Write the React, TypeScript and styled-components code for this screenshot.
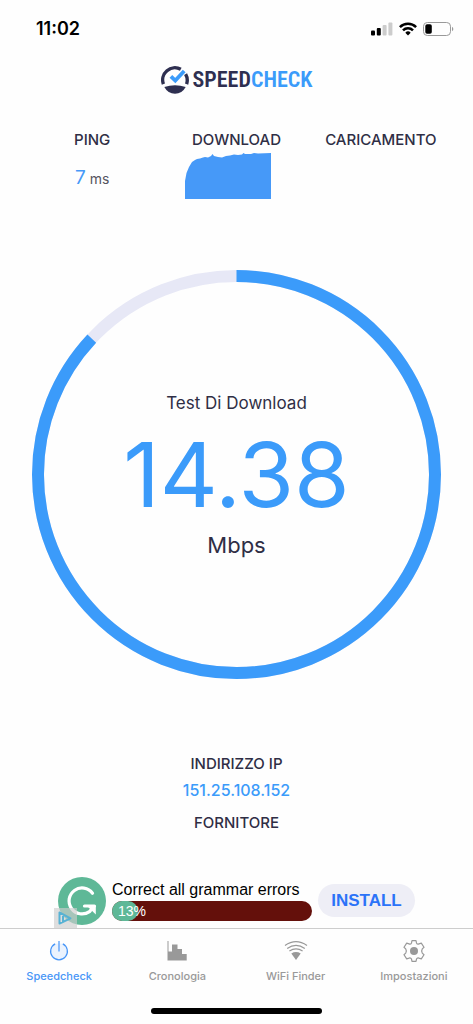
import React from 'react';
import styled, { createGlobalStyle } from 'styled-components';

const GlobalStyle = createGlobalStyle`
  * { box-sizing: border-box; }
  body {
    margin: 0;
    background: #fefefe;
    color: #2f2e45;
    font-family: Inter, "Liberation Sans", sans-serif;
  }
`;

const Page = styled.div`
  display: flex;
  flex-direction: column;
  min-height: 100vh;
`;

const StatusBar = styled.header`
  display: flex;
  align-items: center;
  justify-content: space-between;
  height: 56px;
  padding: 1px 19px 0 36px;
`;

const Clock = styled.time`
  color: #000;
  font-size: 18px;
  font-weight: 600;
  line-height: 24px;
`;

const StatusIcons = styled.div`
  display: flex;
  align-items: center;
  gap: 6px;
`;

const Content = styled.main`
  display: flex;
  flex: 1;
  flex-direction: column;
`;

const Brand = styled.h1`
  display: flex;
  align-items: center;
  justify-content: center;
  gap: 4px;
  height: 48px;
  margin: 0;
  color: #2e2f50;
  font-family: "Roboto Condensed", "Open Sans Condensed", Roboto, sans-serif;
  font-size: 22px;
  font-weight: 600;
  line-height: 28px;
`;

const Accent = styled.span`
  color: #3b9bfa;
`;

const Stats = styled.section`
  display: grid;
  grid-template-columns: repeat(3, 1fr);
  min-height: 72px;
  margin-top: 26px;
  padding: 0 20px;
`;

const Stat = styled.div`
  display: flex;
  flex-direction: column;
  align-items: center;
`;

const Heading = styled.h2`
  margin: 0;
  font-size: 15px;
  font-weight: 500;
  line-height: 20px;
`;

const Ping = styled.p`
  margin: 16px 0 0;
  color: #55555f;
  font-size: 14px;
  line-height: 24px;
`;

const PingValue = styled.span`
  color: #4699f8;
  font-size: 19px;
  font-weight: 400;
`;

const ChartBox = styled.div`
  display: flex;
  margin-top: 3px;
  padding-right: 16px;
`;

const Gauge = styled.section`
  display: grid;
  place-items: center;
  margin: 68px 32px 0;
`;

const Ring = styled.svg`
  display: block;
  grid-area: 1 / 1;
  width: 100%;
`;

const Reading = styled.div`
  display: flex;
  grid-area: 1 / 1;
  flex-direction: column;
  align-items: center;
`;

const TestName = styled.p`
  margin: 0;
  font-size: 17px;
  line-height: 24px;
`;

const Speed = styled.p`
  margin: 16px 0 12px;
  color: #3b9bfa;
  font-size: 90px;
  line-height: 88px;
`;

const Unit = styled.p`
  margin: 0;
  font-size: 22px;
  line-height: 28px;
`;

const Network = styled.section`
  display: flex;
  flex-direction: column;
  align-items: center;
  margin: 75px 0 43px;
`;

const Address = styled.p`
  margin: 6px 0 13px;
  color: #3b9bfa;
  font-size: 16px;
  font-weight: 500;
  line-height: 20px;
`;

const Ad = styled.aside`
  position: relative;
  display: flex;
  align-self: center;
  gap: 6px;
  margin-top: auto;
  padding-bottom: 3px;
  font-family: "Liberation Sans", Arial, sans-serif;
`;

const AdChoices = styled.a`
  position: absolute;
  bottom: 0;
  left: -4px;
  display: flex;
  background: rgba(204, 204, 204, 0.65);
`;

const AdBody = styled.div`
  width: 200px;
  padding-top: 3px;
`;

const AdTitle = styled.p`
  margin: 0;
  color: #000;
  font-size: 16px;
  line-height: 20px;
  white-space: nowrap;
`;

const AdBar = styled.div`
  height: 20px;
  margin-top: 1px;
  border-radius: 10px;
  background: #64100b;
`;

const AdFill = styled.div`
  width: 13%;
  height: 20px;
  padding-left: 6px;
  border-radius: 10px;
  background: #5eb897;
  color: #fff;
  font-size: 14px;
  line-height: 20px;
  white-space: nowrap;
`;

const Install = styled.button`
  align-self: flex-start;
  width: 97px;
  height: 33px;
  margin-top: 7px;
  padding: 0;
  border: 0;
  border-radius: 17px;
  background: #eeeef6;
  color: #2b73f8;
  font: 700 17px/33px "Liberation Sans", Arial, sans-serif;
`;

const TabBar = styled.nav`
  display: grid;
  grid-template-columns: repeat(4, 1fr);
  height: 74px;
  padding-top: 11px;
  border-top: 1px solid #cdcdcd;
`;

const Tab = styled.a<{ $active?: boolean }>`
  display: flex;
  flex-direction: column;
  align-items: center;
  gap: 6px;
  color: ${({ $active }) => ($active ? '#4896f7' : '#999')};
  font-size: 11px;
  font-weight: 500;
  line-height: 16px;
  text-decoration: none;
`;

const HomeBar = styled.footer`
  height: 22px;
  &::before {
    content: "";
    display: block;
    width: 36%;
    height: 6px;
    margin: 6px auto 0;
    border-radius: 3px;
    background: #000;
  }
`;

const SignalIcon = () => (
  <svg width="22" height="14" viewBox="0 0 22 14" aria-hidden="true">
    <rect x="0" y="8.5" width="4" height="5" rx="1" />
    <rect x="5.8" y="6" width="4" height="7.5" rx="1" />
    <rect x="11.6" y="3" width="4" height="10.5" rx="1" fill="#ccc" />
    <rect x="17.4" y="0.5" width="4" height="13" rx="1" fill="#ccc" />
  </svg>
);

const StatusWifiIcon = () => (
  <svg width="18" height="14" viewBox="0 0 18 14" aria-hidden="true">
    <g fill="none" stroke="#000" strokeWidth="2.5">
      <path d="M0.9 5.1A11.5 11.5 0 0 1 17.1 5.1" />
      <path d="M4 8.3A7 7 0 0 1 14 8.3" />
    </g>
    <path d="M6.3 10.7A3.8 3.8 0 0 1 11.7 10.7L9 13.5Z" />
  </svg>
);

const BatteryIcon = () => (
  <svg width="31" height="14" viewBox="0 0 31 14" aria-hidden="true">
    <rect x="0.5" y="0.5" width="27" height="13" rx="3.8" fill="none" stroke="#999" />
    <rect x="2.3" y="2.2" width="6.5" height="9.6" rx="1.8" />
    <path d="M29 4.8C30.8 5.5 30.8 8.5 29 9.2Z" fill="#999" />
  </svg>
);

const LogoIcon = () => (
  <svg width="28" height="28" viewBox="0 0 28 28" aria-hidden="true">
    <g fill="none" stroke="#2e2f50" strokeWidth="3.4">
      <path d="M2.4 18.1A12.2 12.2 0 0 1 19.8 3.3" />
      <path d="M24.6 8.2A12.2 12.2 0 0 1 25.6 18.1" />
    </g>
    <path d="M3.3 21Q14 17.4 24.7 21Q21 27.8 14 27.8Q7 27.8 3.3 21Z" fill="#2e2f50" />
    <path d="M9.9 10.3L14.3 14.6L23.2 5" fill="none" stroke="#3b9bfa" strokeWidth="3.8" />
  </svg>
);

const DownloadChart = () => (
  <svg width="86" height="46" viewBox="0 0 86 46" role="img" aria-label="Download">
    <path
      fill="#4699f8"
      d="M0 46V28L1.5 20L4 14L7 9L10 7L12 6L15 5.5L18 4.5L20 4L23 4.5L26 3L27.5 1L29 3L33 4L37 4.5L41 3L45 2.5L49 1.5L53 2L57 1.5L58.5 0L60 1L66 1L69 0L73 0.5L86 0V46Z"
    />
  </svg>
);

const GrammarIcon = () => (
  <svg width="48" height="48" viewBox="0 0 48 48" aria-hidden="true">
    <circle cx="24" cy="24" r="24" fill="#5eb897" />
    <g fill="none" stroke="#fff" strokeWidth="3.2" strokeLinecap="round" strokeLinejoin="round">
      <path d="M34.5 16.2A13 13 0 1 0 31.500 34.600L35.500 30" />
      <path d="M26.500 29H36.500" />
    </g>
    <path d="M29 29H37.800V37.600Z" fill="#fff" />
  </svg>
);

const PowerIcon = () => (
  <svg width="22" height="22" viewBox="0 0 22 22" aria-hidden="true">
    <circle cx="11" cy="11.5" r="8.3" fill="#ebf3fe" />
    <path d="M7.2 3.9A8.4 8.4 0 1 0 14.8 3.9M11 1V11.500" fill="none" stroke="currentColor" strokeWidth="1.2" />
  </svg>
);

const HistoryIcon = () => (
  <svg width="22" height="22" viewBox="0 0 22 22" aria-hidden="true">
    <path d="M1.5 1H2.5V11.5H6V4.500H11.5V9H16V14H20.7V20.500H1.5Z" fill="currentColor" />
  </svg>
);

const WifiIcon = () => (
  <svg width="24" height="22" viewBox="0 0 24 22" aria-hidden="true">
    <g fill="none" stroke="currentColor" strokeWidth="1.2">
      <path d="M1 5.500Q12 -2.300 23 5.500" />
      <path d="M3.2 8.400Q12 2.200 20.8 8.400" />
      <path d="M5.4 11.100Q12 6.600 18.6 11.100" />
    </g>
    <path d="M7.3 13.500Q12 10.700 16.7 13.500L12 20Z" fill="currentColor" />
  </svg>
);

const GearIcon = () => (
  <svg width="22" height="22" viewBox="0 0 22 22" aria-hidden="true">
    <path
      fill="none"
      stroke="currentColor"
      strokeWidth="1.2"
      strokeLinejoin="round"
      d="M9 0.600H13L13.5 2.9Q14.3 4.6 16 3.9L18.3 3.1L21 7.300L19.300 8.900Q18 11 19.300 13.100L21 14.700L18.3 18.9L16 18.1Q14.3 17.4 13.5 19.1L13 21.4H9L8.5 19.1Q7.7 17.4 6 18.1L3.7 18.9L1 14.700L2.700 13.100Q4 11 2.700 8.900L1 7.300L3.7 3.1L6 3.9Q7.7 4.6 8.5 2.9Z"
    />
    <circle cx="11" cy="11" r="4" fill="currentColor" />
  </svg>
);

const tabs = [
  { label: 'Speedcheck', Icon: PowerIcon, active: true },
  { label: 'Cronologia', Icon: HistoryIcon },
  { label: 'WiFi Finder', Icon: WifiIcon },
  { label: 'Impostazioni', Icon: GearIcon },
];

export default function App() {
  return (
    <Page>
      <GlobalStyle />
      <StatusBar>
        <Clock>11:02</Clock>
        <StatusIcons>
          <SignalIcon />
          <StatusWifiIcon />
          <BatteryIcon />
        </StatusIcons>
      </StatusBar>
      <Content>
        <Brand>
          <LogoIcon />
          <span>SPEED<Accent>CHECK</Accent></span>
        </Brand>
        <Stats>
          <Stat>
            <Heading>PING</Heading>
            <Ping><PingValue>7</PingValue> ms</Ping>
          </Stat>
          <Stat>
            <Heading>DOWNLOAD</Heading>
            <ChartBox><DownloadChart /></ChartBox>
          </Stat>
          <Stat>
            <Heading>CARICAMENTO</Heading>
          </Stat>
        </Stats>
        <Gauge>
          <Ring viewBox="0 0 410 410" aria-hidden="true">
            <g fill="none" strokeWidth="12" transform="rotate(-90 205 205)">
              <circle cx="205" cy="205" r="199" stroke="#e7e8f6" />
              <circle cx="205" cy="205" r="199" stroke="#3b9bfa" pathLength="100" strokeDasharray="87 13" />
            </g>
          </Ring>
          <Reading>
            <TestName>Test Di Download</TestName>
            <Speed>14.38</Speed>
            <Unit>Mbps</Unit>
          </Reading>
        </Gauge>
        <Network>
          <Heading>INDIRIZZO IP</Heading>
          <Address>151.25.108.152</Address>
          <Heading>FORNITORE</Heading>
        </Network>
        <Ad>
          <GrammarIcon />
          <AdBody>
            <AdTitle>Correct all grammar errors</AdTitle>
            <AdBar><AdFill>13%</AdFill></AdBar>
          </AdBody>
          <Install type="button">INSTALL</Install>
          <AdChoices href="#" aria-label="AdChoices">
            <svg width="23" height="20" viewBox="0 0 23 20" aria-hidden="true">
              <path d="M5.5 4.5V15.5L16.5 10.3L5.5 4.5ZM9 8V14" fill="none" stroke="#57b2d4" strokeWidth="2" strokeLinejoin="round" />
            </svg>
          </AdChoices>
        </Ad>
      </Content>
      <TabBar>
        {tabs.map(({ label, Icon, active }) => (
          <Tab key={label} href="#" $active={active} aria-current={active ? 'page' : undefined}>
            <Icon />
            {label}
          </Tab>
        ))}
      </TabBar>
      <HomeBar />
    </Page>
  );
}
